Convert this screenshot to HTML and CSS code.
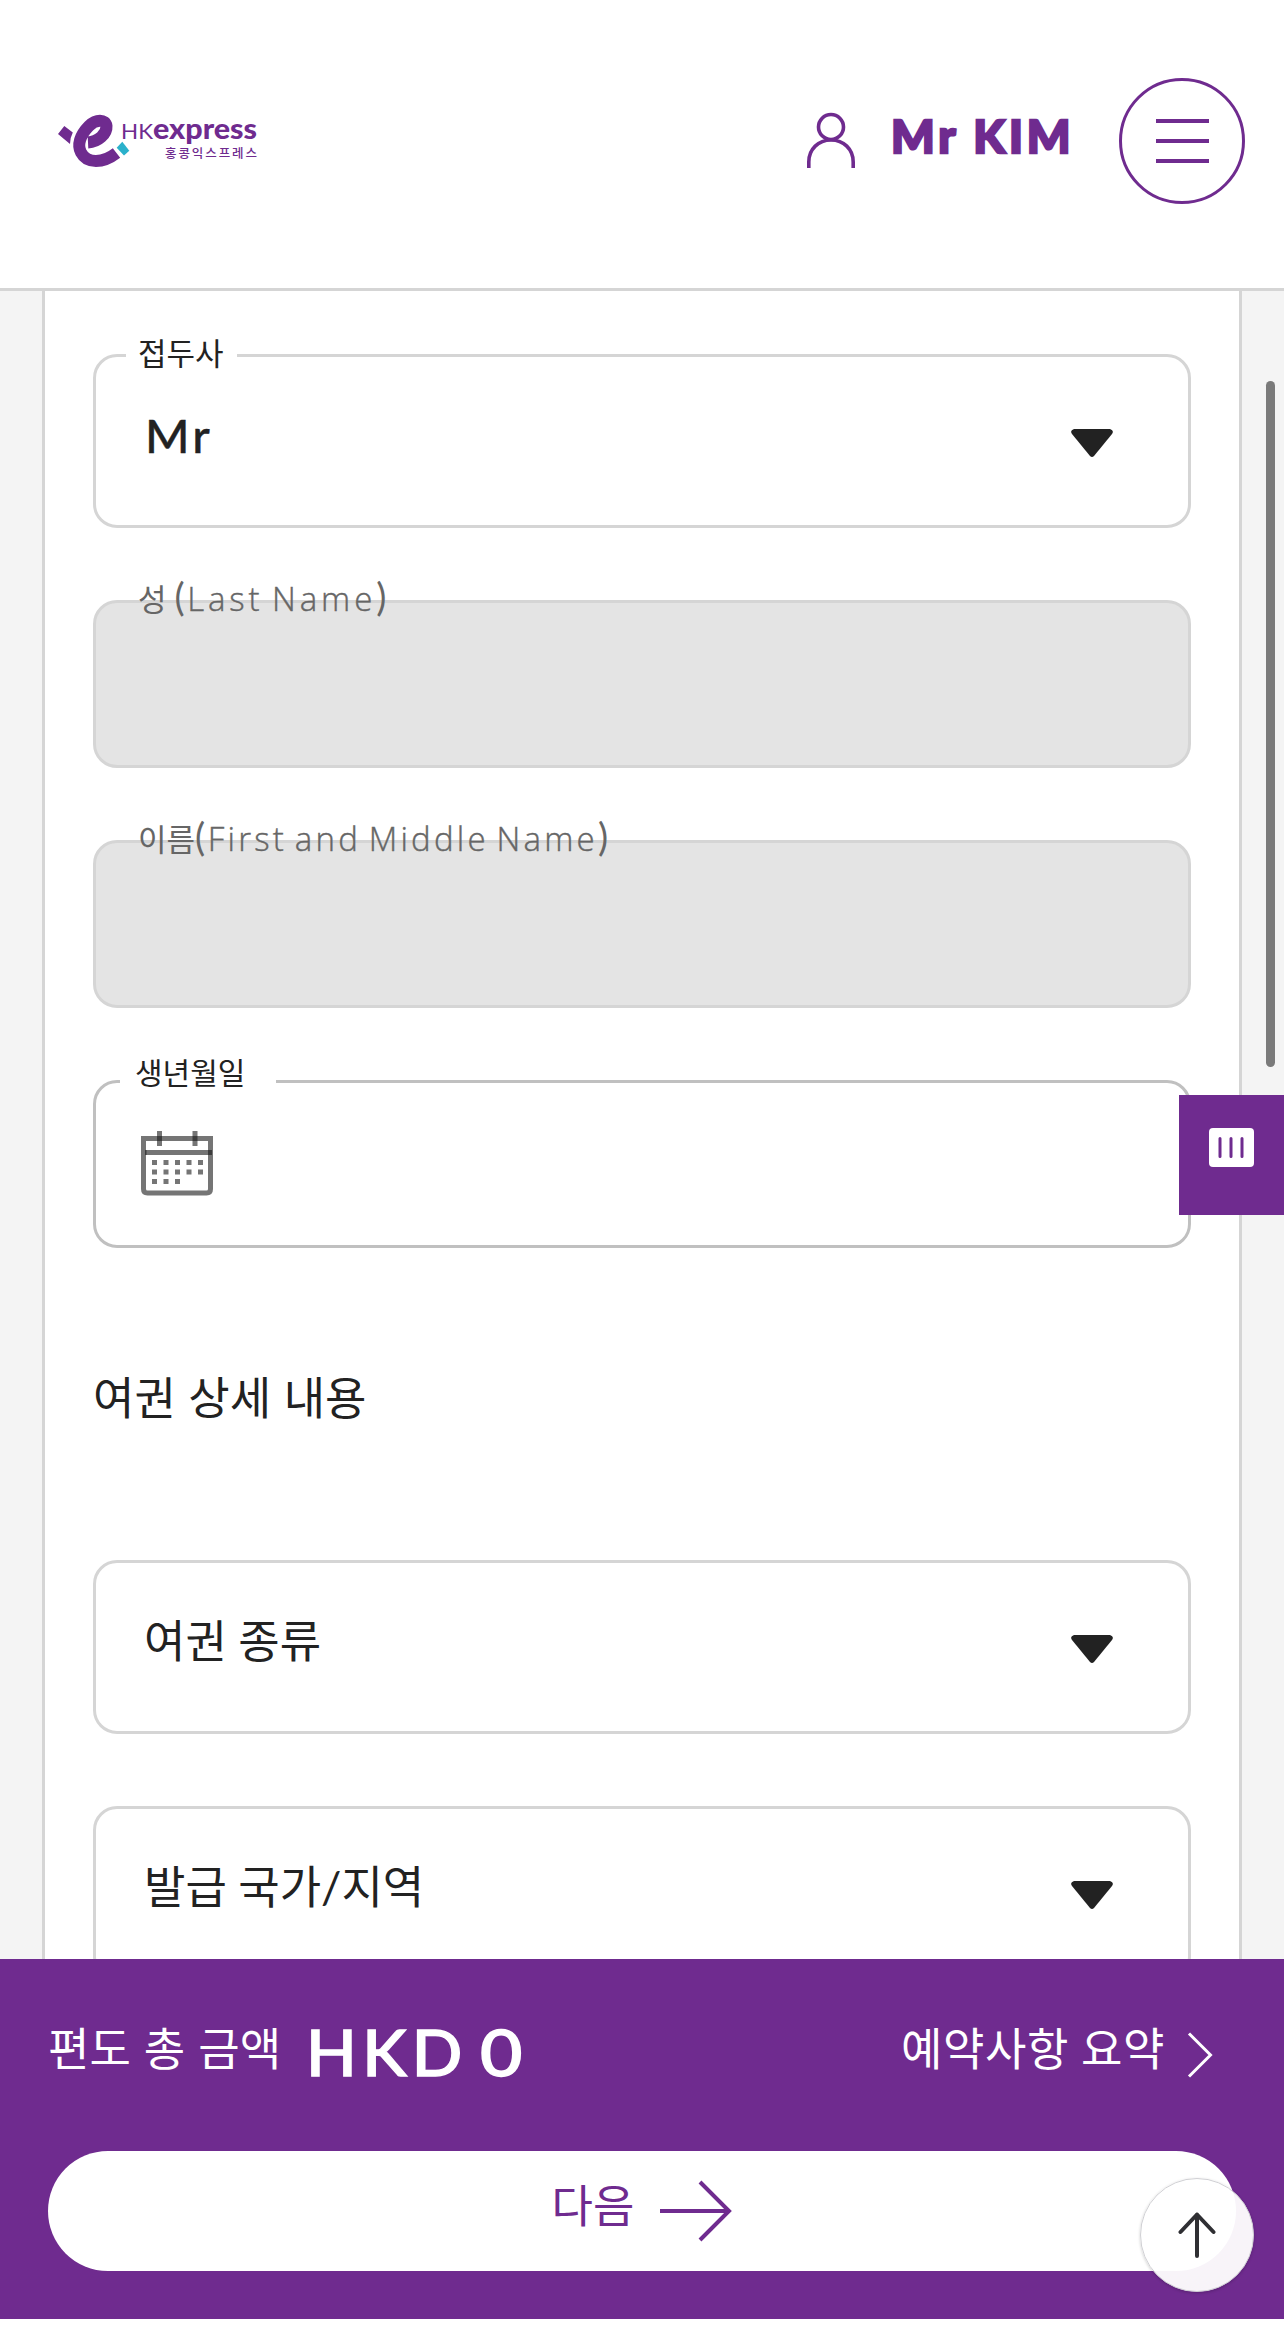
FILE: index.html
```
<!DOCTYPE html>
<html lang="ko">
<head>
  <meta charset="UTF-8" />
  <meta name="viewport" content="width=device-width, initial-scale=1.0"/>
  <title>HK express</title>
  <link rel="stylesheet" href="styles.css">
</head>
<body>
  <header class="header">
    <a class="logo" href="#">
      <svg width="216" height="60" viewBox="54 112 216 60">
        <path d="M58 134 L64.3 126 L72.8 132.6 Q70 138 70 144 Z" fill="#6f2b8f"/>
        <path d="M88 142.500 C98 142 107 134 106.500 126 C105.500 119 96 119 89 126 C80 135 77 145 81 152.500 C87 164 103 163.500 116.500 153" fill="none" stroke="#6f2b8f" stroke-width="12"/>
        <path d="M116.700 147.700 L122.300 141.700 L129.300 150.700 L124 155.500 Z" fill="#2bb1cb"/>
        <text class="logo-hk" x="121" y="139" textLength="32" lengthAdjust="spacingAndGlyphs">HK</text>
        <text class="logo-express" x="153" y="139" textLength="104" lengthAdjust="spacingAndGlyphs">express</text>
        <text class="logo-kr" x="165" y="158" textLength="92">홍콩익스프레스</text>
      </svg>
    </a>
    <div class="header-right">
      <svg class="user-icon" width="50" height="58" viewBox="0 0 50 58" fill="none" stroke="#6f2b8f" stroke-width="3.600">
        <circle cx="25" cy="15" r="12.500"/>
        <path d="M2.800 56 V50 C2.800 37 12.500 28 25 28 C37.500 28 47.200 37 47.200 50 V56"/>
      </svg>
      <span class="user-name">Mr KIM</span>
      <button class="menu-btn" aria-label="menu">
        <span></span><span></span><span></span>
      </button>
    </div>
  </header>

  <main class="main">
    <form class="card">
      <div class="field select">
        <label class="prefix-label">접두사</label>
        <span class="value">Mr</span>
        <svg class="caret" width="42" height="28" viewBox="0 0 42 28"><path d="M3 0 H39 Q43.500 1.500 41 5 L23 27 Q21 29 19 27 L1 5 Q-1.500 1.500 3 0 Z"/></svg>
      </div>

      <div class="field disabled">
        <label>성 <i>(</i><span class="last">Last Name</span><i>)</i></label>
      </div>

      <div class="field disabled">
        <label>이름<i>(</i><span class="first">First and Middle Name</span><i>)</i></label>
      </div>

      <div class="field date">
        <label class="birth-label">생년월일</label>
        <svg class="calendar" width="72" height="65" viewBox="0 0 72 65">
          <path d="M2.500 7.500 H69.500 V58 Q69.500 62 65.500 62 H6.500 Q2.500 62 2.500 58 Z" fill="none" stroke="#757575" stroke-width="5"/>
          <g fill="#757575">
            <path d="M4 19 H71 V24 H4 Z M16 0 h5 v15 h-5 Z M51.500 0 h5 v15 h-5 Z"/>
            <path d="M11 29h5v5h-5z M22.500 29h5v5h-5z M34 29h5v5h-5z M45.500 29h5v5h-5z M57 29h5v5h-5z"/>
            <path d="M11 38.500h5v5h-5z M22.500 38.500h5v5h-5z M34 38.500h5v5h-5z M45.500 38.500h5v5h-5z M57 38.500h5v5h-5z"/>
            <path d="M11 48h5v5h-5z M22.500 48h5v5h-5z M34 48h5v5h-5z"/>
          </g>
          <path d="M16 5 h5 v5 h-5 Z M51.500 5 h5 v5 h-5 Z M4 19 h1.500 v5 h-1.500 Z M67 19 h4 v5 h-4 Z" fill="#3c3c3c"/>
        </svg>
      </div>

      <h2>여권 상세 내용</h2>

      <div class="field select">
        <span class="value kr">여권 종류</span>
        <svg class="caret" width="42" height="28" viewBox="0 0 42 28"><path d="M3 0 H39 Q43.500 1.500 41 5 L23 27 Q21 29 19 27 L1 5 Q-1.500 1.500 3 0 Z"/></svg>
      </div>

      <div class="field select">
        <span class="value kr">발급 국가/지역</span>
        <svg class="caret" width="42" height="28" viewBox="0 0 42 28"><path d="M3 0 H39 Q43.500 1.500 41 5 L23 27 Q21 29 19 27 L1 5 Q-1.500 1.500 3 0 Z"/></svg>
      </div>
    </form>
  </main>

  <footer class="footer">
    <div class="summary">
      <span class="total-label">편도 총 금액</span>
      <span class="total">HKD<b>0</b></span>
      <a class="summary-link" href="#">
        예약사항 요약
        <svg width="26" height="46" viewBox="0 0 26 46" fill="none" stroke="#fff" stroke-width="3"><path d="M2 1.500 L23.500 23 L2 44.500"/></svg>
      </a>
    </div>
    <button class="next-btn">
      <span>다음</span>
      <svg width="72" height="62" viewBox="0 0 72 62" fill="none" stroke="#6f2b8f" stroke-width="4"><path d="M0 31 H69 M40 2 L69 31 L40 60"/></svg>
    </button>
  </footer>

  <div class="scrollbar"></div>
  <div class="side-tab">
    <svg width="45" height="39" viewBox="0 0 45 39">
      <rect width="45" height="39" rx="4" fill="#fff"/>
      <path d="M11 10.500 V28.500 M22 10.500 V28.500 M33 10.500 V28.500" stroke="#6f2b8f" stroke-width="3" stroke-linecap="round"/>
    </svg>
  </div>
  <button class="top-btn" aria-label="top">
    <svg width="38" height="46" viewBox="0 0 38 46" fill="none" stroke="#2f2f33" stroke-width="4" stroke-linecap="round" stroke-linejoin="round"><path d="M19 44 V2.500 M2.500 20 L19 2.500 L35.500 20"/></svg>
  </button>
</body>
</html>
```
FILE: styles.css
```
* {
  box-sizing: border-box;
}
body {
  font-family: Lato, "Noto Sans CJK KR", sans-serif;
  background-color: #fff;
  color: #222;
  margin: 0;
  height: 2342px;
  overflow: hidden;
}
button {
  font-family: inherit;
  padding: 0;
  cursor: pointer;
}
svg {
  display: block;
  flex-shrink: 0;
}
.header {
  height: 291px;
  padding: 78px 39px 0 54px;
  border-bottom: 3px solid #d5d5d5;
  display: flex;
  justify-content: space-between;
}
.logo {
  margin-top: 34px;
}
.logo text {
  fill: #6f2b8f;
}
.logo-hk {
  font-size: 22px;
  font-weight: 400;
}
.logo-express {
  font-size: 29px;
  font-weight: 900;
}
.logo-kr {
  font-size: 12.5px;
  font-weight: 500;
}
.header-right {
  display: flex;
}
.user-icon {
  margin: 34px 35px 0 0;
}
.user-name {
  width: 228px;
  margin-top: 28px;
  line-height: 60px;
  font-size: 46px;
  font-weight: 900;
  letter-spacing: 3.8px;
  color: #6f2b8f;
  -webkit-text-stroke: 2.4px #6f2b8f;
  white-space: nowrap;
}
.menu-btn {
  width: 126px;
  height: 126px;
  border: 3px solid #6f2b8f;
  border-radius: 50%;
  background: none;
  display: flex;
  flex-direction: column;
  align-items: center;
  justify-content: center;
  gap: 16.5px;
}
.menu-btn span {
  width: 53px;
  height: 3.6px;
  background-color: #6f2b8f;
}
.main {
  height: 1668px;
  padding: 0 42px;
  background-color: #f4f4f4;
  overflow: hidden;
}
.card {
  height: 1800px;
  padding: 63px 48px 0;
  border: solid #d5d5d5;
  border-width: 0 3px;
  background-color: #fff;
}
.field {
  position: relative;
  height: 168px;
  margin-bottom: 72px;
  border: 3px solid #d5d5d5;
  border-radius: 24px;
}
.field label {
  position: absolute;
  top: -28px;
  left: 30px;
  height: 48px;
  padding: 0 12px;
  line-height: 48px;
  font-size: 31px;
  background-color: #fff;
  white-space: nowrap;
}
.field .prefix-label {
  width: 111px;
}
.field .birth-label {
  top: -35px;
  left: 24px;
  width: 156px;
  padding: 0 15px;
  font-size: 30px;
}
.select {
  height: 174px;
  display: flex;
  justify-content: space-between;
  padding: 49px 75px 0 49px;
}
.value {
  line-height: 60px;
  font-size: 46px;
  font-weight: 500;
  letter-spacing: 3px;
  -webkit-text-stroke: 0.4px #222;
  transform: scaleX(1.04);
  transform-origin: left;
}
.value.kr {
  margin: -1px 0 0 -1px;
  font-size: 45px;
  font-weight: 400;
  letter-spacing: 0;
  -webkit-text-stroke: 0;
  transform: none;
}
.caret {
  margin-top: 23px;
  fill: #222;
}
.disabled {
  background-color: #e4e4e4;
}
.field.disabled label {
  top: -31px;
  background: none;
  color: #666;
}
.disabled i {
  font-style: normal;
  font-size: 38px;
  letter-spacing: 2.5px;
}
.disabled .last,
.disabled .first {
  font-family: "Open Sans", sans-serif;
  font-weight: 300;
  font-size: 33px;
  letter-spacing: 3.2px;
  word-spacing: -4px;
  -webkit-text-stroke: 0.4px #666;
}
.disabled .last {
  letter-spacing: 3.9px;
}
.date {
  border-color: #c0c0c0;
  padding: 48px 0 0 45px;
}
h2 {
  margin: 118px 0 129px;
  height: 65px;
  line-height: 65px;
  font-size: 45px;
  font-weight: 400;
  word-spacing: 1px;
}
.footer {
  height: 360px;
  padding: 60px 48px 0;
  background-color: #6f2b8f;
  color: #fff;
  font-size: 45px;
}
.summary {
  height: 132px;
  display: flex;
  line-height: 60px;
  white-space: nowrap;
}
.total-label {
  width: 258px;
  word-spacing: 1.5px;
}
.total {
  margin-top: 3px;
  font-size: 63px;
  font-weight: 500;
  letter-spacing: 5px;
  -webkit-text-stroke: 1.4px #fff;
  transform: scaleX(1.055);
  transform-origin: left;
}
.total b {
  display: inline-block;
  margin-left: 14px;
  font-weight: 500;
  transform: scaleX(1.1);
}
.summary-link {
  margin-left: auto;
  margin-right: 23px;
  display: flex;
  gap: 22px;
  color: #fff;
  text-decoration: none;
  letter-spacing: 0.6px;
}
.summary-link svg {
  margin-top: 13px;
}
.next-btn {
  width: 100%;
  height: 120px;
  border: none;
  border-radius: 60px;
  background-color: #fff;
  color: #6f2b8f;
  display: flex;
  align-items: center;
  justify-content: center;
  gap: 26px;
  font-size: 45px;
}
.next-btn span {
  padding-bottom: 15px;
}
.scrollbar {
  position: absolute;
  top: 381px;
  left: 1266px;
  width: 9px;
  height: 686px;
  border-radius: 5px;
  background-color: #7a7a7a;
}
.side-tab {
  position: absolute;
  top: 1095px;
  right: 0;
  width: 105px;
  height: 120px;
  padding: 33px 30px;
  background-color: #6f2b8f;
}
.top-btn {
  position: absolute;
  top: 2178px;
  right: 30px;
  width: 114px;
  height: 114px;
  border: 1px solid #d0d0d4;
  border-radius: 50%;
  background-color: rgba(255, 255, 255, 0.95);
  box-shadow: 0 1px 3px rgba(0, 0, 0, 0.2);
  display: flex;
  align-items: center;
  justify-content: center;
}
```
